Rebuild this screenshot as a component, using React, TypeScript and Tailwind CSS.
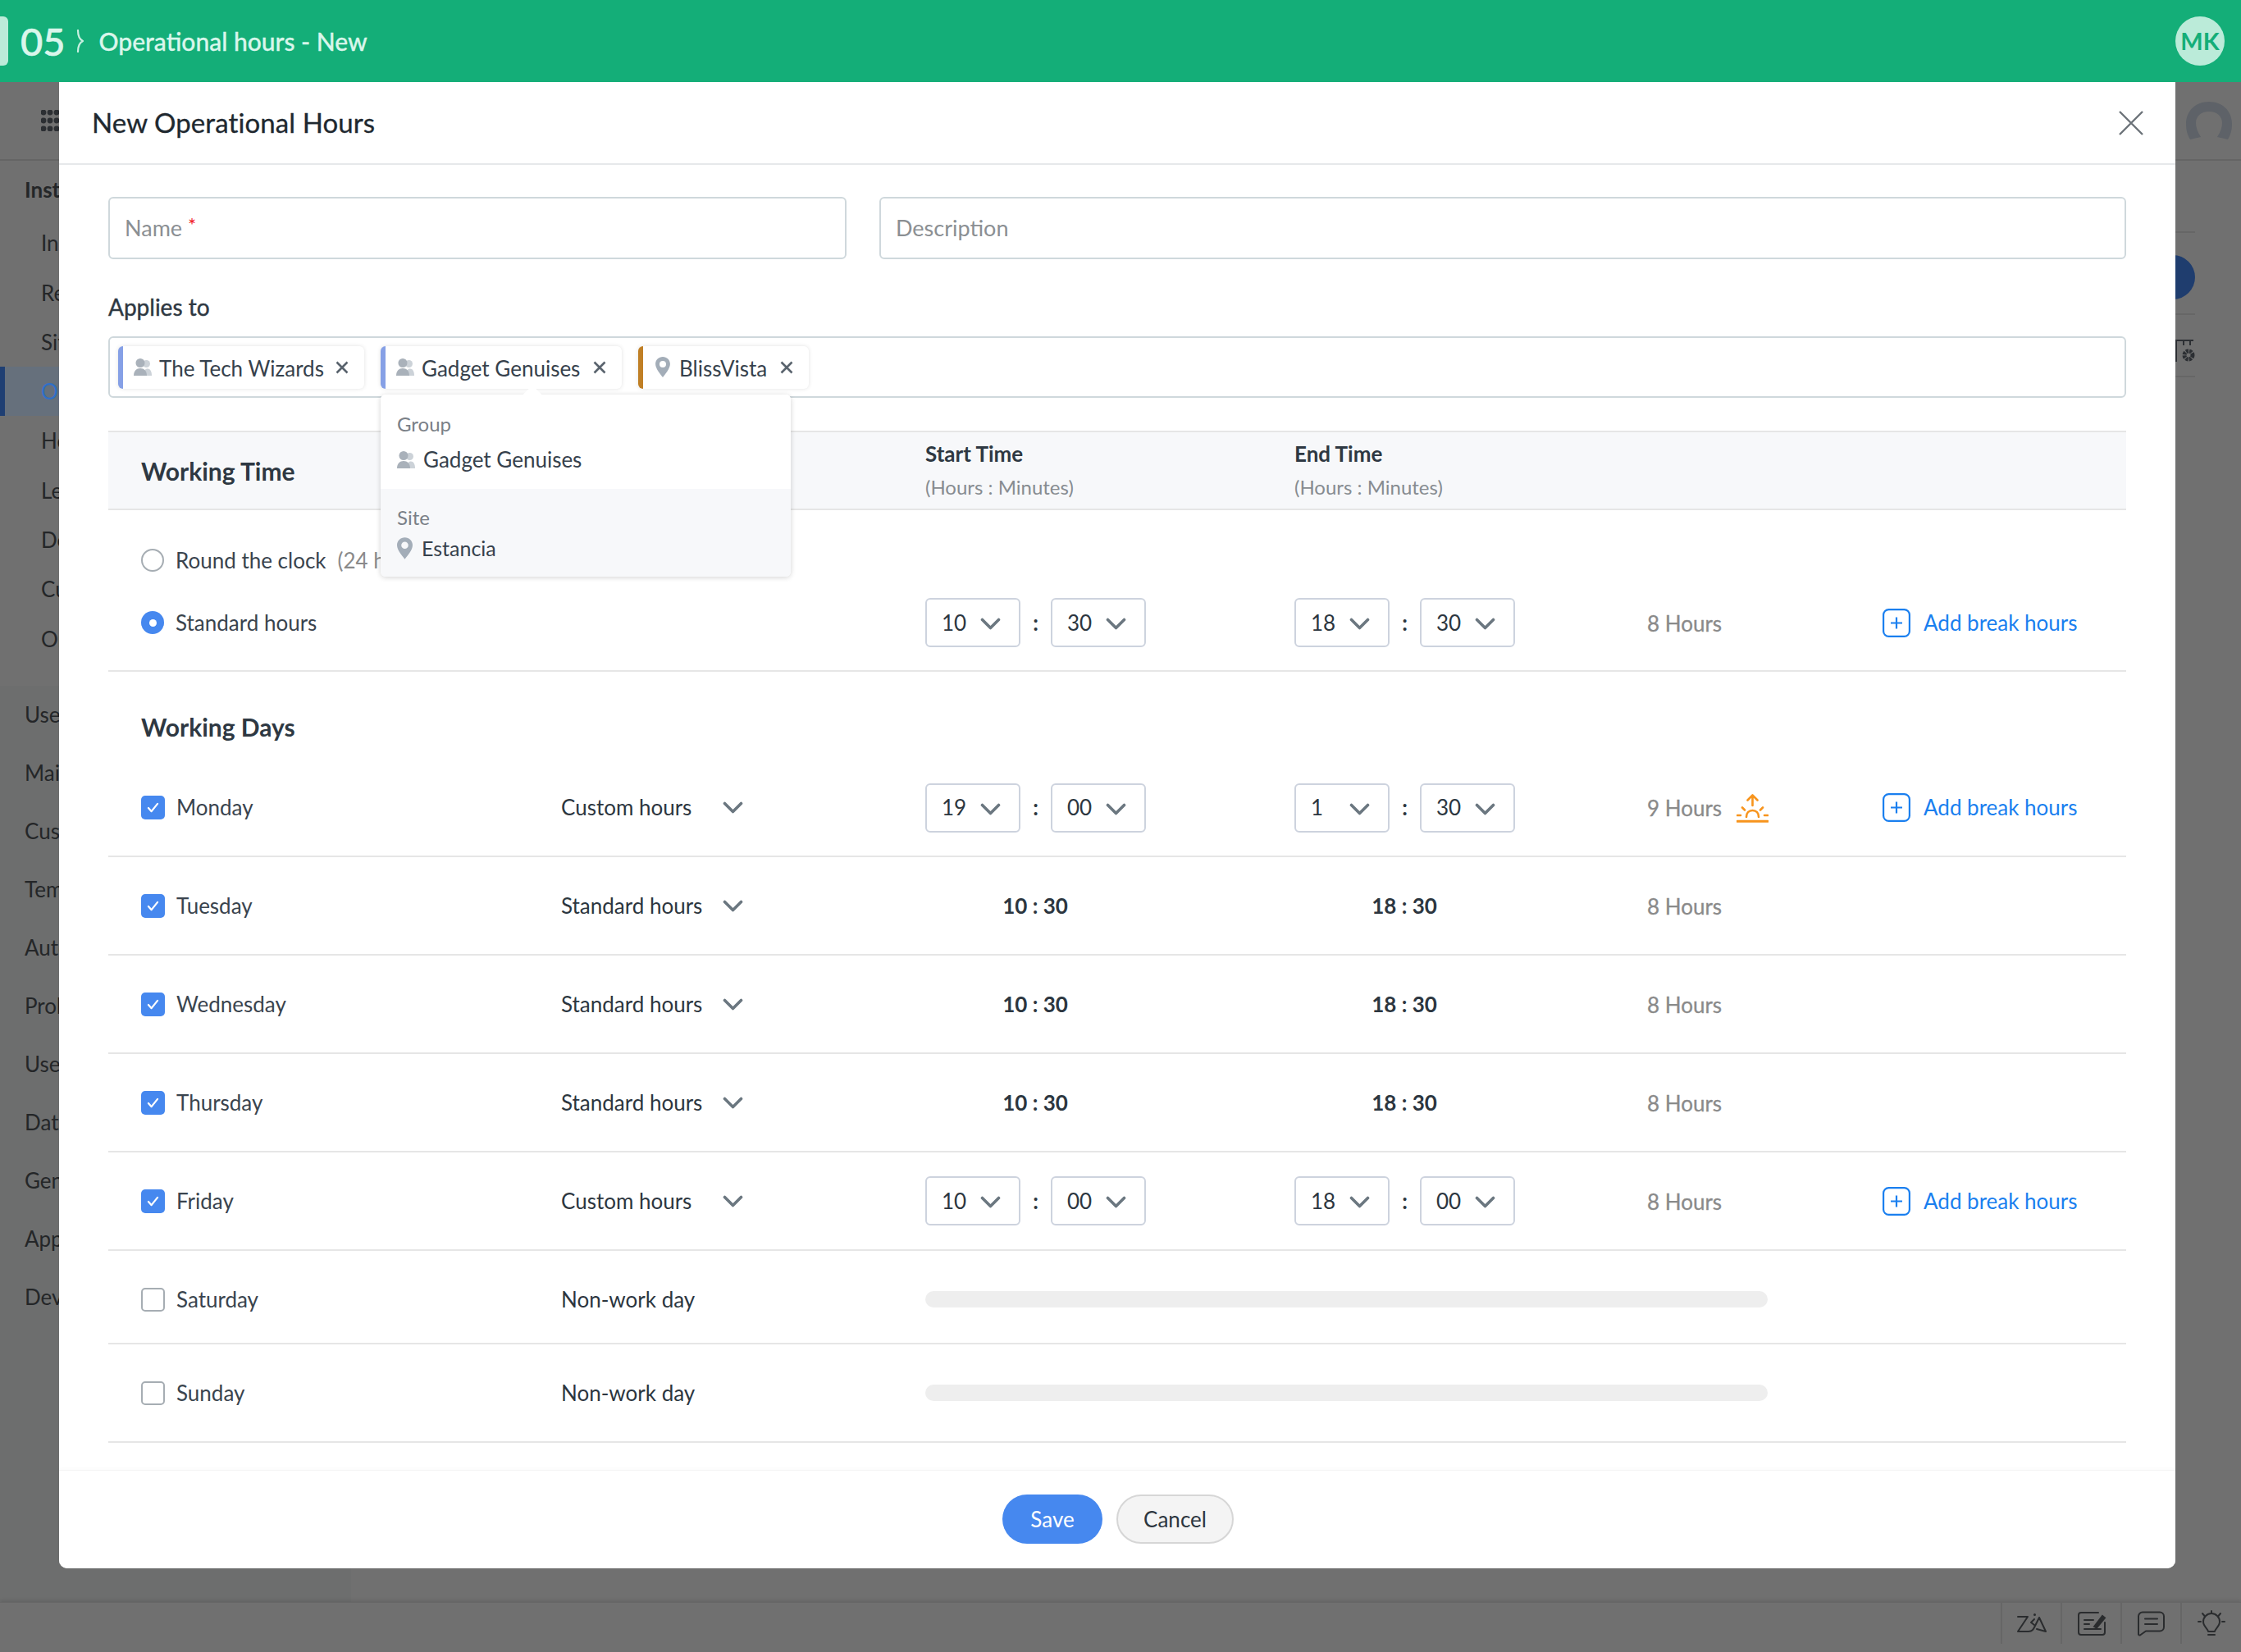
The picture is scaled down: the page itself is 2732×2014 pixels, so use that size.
import React from "react";

const Chevron = ({ className = "w-[25px] h-[15px]" }: { className?: string }) => (
  <svg viewBox="0 0 25 15" className={className} fill="none" stroke="#6b7780" strokeWidth="3.6" strokeLinecap="round" strokeLinejoin="round">
    <path d="M2.5 2.5 L12.5 12.5 L22.5 2.5" />
  </svg>
);

const GroupIcon = ({ className = "" }: { className?: string }) => (
  <svg viewBox="0 0 22 21" className={className}>
    <circle cx="15.5" cy="6.5" r="4.5" fill="#ccd2d8" />
    <path d="M12 21c0-6 2-8.5 5-8.5s5 3 5 8.5z" fill="#ccd2d8" />
    <circle cx="8" cy="5.5" r="5.5" fill="#a9b1ba" />
    <path d="M0 21c0-6 3.5-9 8-9s8 3 8 9z" fill="#a9b1ba" />
  </svg>
);

const PinIcon = ({ className = "" }: { className?: string }) => (
  <svg viewBox="0 0 20 28" className={className}>
    <path fillRule="evenodd" d="M10 0C4.5 0 0 4.4 0 9.8 0 16.5 7.5 24.5 10 28c2.500-3.500 10-11.500 10-18.200C20 4.400 15.500 0 10 0zm0 5.500a4.500 4.500 0 1 1 0 9 4.500 4.500 0 0 1 0-9z" fill="#a3adb8" />
  </svg>
);

const SmallX = () => (
  <svg viewBox="0 0 16 16" className="w-[16px] h-[16px]" fill="none" stroke="#59636d" strokeWidth="2.600">
    <path d="M1.500 1.500 L14.500 14.500 M14.500 1.500 L1.500 14.500" />
  </svg>
);

const Tag = ({ bar, icon, label, width }: { bar: string; icon: React.ReactNode; label: string; width: string }) => (
  <div className={`flex items-center h-[52px] rounded-[6px] bg-white shadow-[0_0_5px_rgba(0,0,0,0.12)] border-l-[6px] ${bar} ${width}`}>
    <div className="w-[44px] flex justify-center pl-[4px]">{icon}</div>
    <span className="text-[26px] leading-[32px] pt-[2px] text-[#36414c] whitespace-nowrap">{label}</span>
    <span className="ml-auto mr-[19px] flex"><SmallX /></span>
  </div>
);

const Select = ({ v }: { v: string }) => (
  <div className="relative w-[116px] h-[60px] rounded-[6px] border-2 border-[#cdd3de] flex items-center pl-[18px] text-[26px] text-[#2c3640] bg-white">
    {v}
    <span className="absolute left-[65px] top-[22px] flex"><Chevron /></span>
  </div>
);

const TimePair = ({ h, m }: { h: string; m: string }) => (
  <div className="flex items-center w-[269px] justify-between">
    <Select v={h} />
    <span className="text-[26px] text-[#2c3640] font-bold">:</span>
    <Select v={m} />
  </div>
);

const AddBreak = () => (
  <div className="flex items-center gap-[16px] text-[#1a7fef] text-[26px] whitespace-nowrap">
    <svg viewBox="0 0 34 35" className="w-[34px] h-[35px] shrink-0" fill="none" stroke="#1a7fef" strokeWidth="2.200">
      <rect x="1.100" y="1.100" width="31.800" height="32.800" rx="6.500" />
      <path d="M17 10.500v14M10 17.500h14" />
    </svg>
    <span>Add break hours</span>
  </div>
);

const Sunrise = () => (
  <svg viewBox="0 0 39 35" className="w-[39px] h-[35px] shrink-0" fill="none" stroke="#f7941d" strokeWidth="2.600" strokeLinecap="round">
    <path d="M19.500 1.500V14M13.500 7.500l6-6 6 6" strokeLinejoin="round" />
    <path d="M12 28c0-5 3-8 7.500-8s7.500 3 7.500 8" />
    <path d="M1 26h4M34 26h4M7 16.500l3 3M32 16.500l-3 3" />
    <path d="M1 33.300h37" strokeWidth="3" />
  </svg>
);

const Check = ({ on }: { on: boolean }) =>
  on ? (
    <div className="w-[29px] h-[29px] rounded-[5px] bg-[#4688ef] flex items-center justify-center">
      <svg viewBox="0 0 16 14" className="w-[15px] h-[13px]" fill="none" stroke="#fff" strokeWidth="2.400" strokeLinecap="round" strokeLinejoin="round">
        <path d="M2 7.500l4 4.500 8-10" />
      </svg>
    </div>
  ) : (
    <div className="w-[29px] h-[29px] rounded-[5px] border-2 border-[#a6adb3] bg-white" />
  );

const gridCols = "grid grid-cols-[512px_444px_450px_430px_287px_297px] items-center pl-[40px]";
const gridRow = `${gridCols} border-b-2 border-[#e6e6e6]`;

const DayName = ({ on, name }: { on: boolean; name: string }) => (
  <div className="flex items-center gap-[14px] text-[26px] text-[#3a444e]">
    <Check on={on} />
    <span>{name}</span>
  </div>
);

const HourType = ({ label }: { label: string }) => (
  <div className="relative flex items-center text-[26px] text-[#2c3640]">
    <span>{label}</span>
    <span className="absolute left-[197px] top-[12px] flex"><Chevron /></span>
  </div>
);

const Hours = ({ t, sun }: { t: string; sun?: boolean }) => (
  <div className="flex items-center gap-[18px] text-[26px] pt-[2px] [-webkit-text-stroke:0.3px_#8a8a8a] text-[#8a8a8a] whitespace-nowrap">
    <span>{t}</span>
    {sun && <Sunrise />}
  </div>
);

const Fixed = ({ t }: { t: string }) => (
  <div className="w-[268px] text-center text-[26px] font-bold text-[#2c3640]">{t}</div>
);

const sidebar: [string, string][] = [
  ["Instance Configuration", "pl-[30px] font-bold h-[70px]"],
  ["Instance Settings", "pl-[50px] h-[61px]"],
  ["Regions", "pl-[50px] h-[60px]"],
  ["Sites", "pl-[50px] h-[60px]"],
  ["Operational Hours", "pl-[44px] h-[60px] text-[#2f6fc8] bg-[#66707c] border-l-[6px] border-[#1f3f73]"],
  ["Holidays", "pl-[50px] h-[61px]"],
  ["Leave Types", "pl-[50px] h-[60px]"],
  ["Departments", "pl-[50px] h-[60px]"],
  ["Currency", "pl-[50px] h-[61px]"],
  ["Organization Roles", "pl-[50px] h-[61px]"],
];
const sidebar2 = ["Users & Permissions", "Mail Settings", "Customization", "Templates", "Automation", "Problem Management", "User Survey", "Data Administration", "General Settings", "Apps & Add-ons", "Developer Space"];

export default function App() {
  return (
    <div className="relative w-[2732px] h-[2014px] overflow-hidden bg-[#707070] font-['Lato',sans-serif] flex flex-col">
      {/* Top bar */}
      <header className="h-[100px] shrink-0 bg-[#14ae78] flex items-center text-[#d9f6eb] relative z-20">
        <div className="w-[10px] h-[60px] rounded-r-[6px] bg-[#bcebd9]" />
        <span className="ml-[15px] text-[47px] leading-none font-medium [-webkit-text-stroke:0.6px_#d9f6eb]">05</span>
        <svg viewBox="0 0 10 28" className="ml-[13px] w-[10px] h-[28px]" fill="none" stroke="#c9f0e1" strokeWidth="2.200" strokeLinecap="round" strokeLinejoin="round">
          <path d="M2 1c0 6 2 11 6 13-4 2-6 7-6 13" />
        </svg>
        <span className="ml-[18px] text-[30px] font-medium whitespace-nowrap [-webkit-text-stroke:0.3px_#d9f6eb]">Operational hours - New</span>
        <div className="ml-auto mr-[20px] w-[60px] h-[60px] rounded-full bg-[#bbebd9] text-[#14ae78] text-[29px] font-bold flex items-center justify-center">MK</div>
      </header>

      {/* Background page */}
      <div className="flex-1 flex min-h-0">
        <aside className="w-[428px] bg-[#6d6e6e] text-[26px] text-[#242628] overflow-hidden shrink-0 flex flex-col">
          <div className="h-[96px] shrink-0 bg-[#707070] border-b-2 border-[#656565] flex items-center pl-[50px]">
            <svg viewBox="0 0 22 26" className="w-[22px] h-[26px]" fill="#2c2f33">
              {[3, 13, 23].map((y) => [3, 11, 19].map((x) => <circle key={`${x}-${y}`} cx={x} cy={y} r="3.400" />))}
            </svg>
          </div>
          <div className="bg-[#707070] shrink-0 h-[640px] flex flex-col">
            {sidebar.map(([t, c]) => (
              <div key={t} className={`flex items-center whitespace-nowrap shrink-0 ${c}`}>{t}</div>
            ))}
          </div>
          {sidebar2.map((t) => (
            <div key={t} className="h-[71px] shrink-0 flex items-center pl-[30px] whitespace-nowrap">{t}</div>
          ))}
        </aside>
        <main className="flex-1 flex justify-end">
          <div className="w-[80px] flex flex-col">
            <div className="h-[96px] flex items-center justify-end pr-[11px] border-b-2 border-[#656565]">
              <svg viewBox="0 0 56 46" className="w-[56px] h-[46px]" fill="#5e6268">
                <path d="M28 0C12 0 0 11 0 27c0 8 2 14 5 19l13-3c-4-6-6-12-6-17 0-8 6-14 16-14s16 6 16 14c0 5-2 11-6 17l13 3c3-5 5-11 5-19C56 11 44 0 28 0z" />
              </svg>
            </div>
            <div className="h-[88px] w-[24px] border-b-2 border-[#666]" />
            <div className="h-[100px] w-[24px] border-b-2 border-[#666]" />
            <div className="h-[76px] w-[24px] border-b-2 border-[#666]" />
          </div>
        </main>
      </div>

      <div className="absolute left-[2622px] top-[311px] w-[54px] h-[54px] rounded-full bg-[#1f3d6e]" />
      <svg viewBox="0 0 26 30" className="absolute left-[2652px] top-[413px] w-[26px] h-[30px]" fill="none" stroke="#2c2f33" strokeWidth="2">
        <path d="M0 2h22M1 2v26M10 2v6M18 2v6" />
        <circle cx="16" cy="20" r="5" strokeWidth="5" strokeDasharray="3 1" />
      </svg>

      {/* Bottom bar */}
      <footer className="h-[61px] shrink-0 bg-[#707070] border-t border-[#666] shadow-[0_-2px_4px_rgba(0,0,0,0.1)] flex justify-end relative">
        {[
          <svg key="z" viewBox="0 0 36 26" className="w-[36px] h-[26px]" fill="none" stroke="#2a2c2e" strokeWidth="2" strokeLinecap="round" strokeLinejoin="round">
            <path d="M1 5h12L1 23h13c5 0 6-3 8-7l5-10 8 17-11-3" />
            <circle cx="21.500" cy="2.500" r="1.500" fill="#2a2c2e" stroke="none" />
            <path d="M21 8l-4 4 4 3" />
          </svg>,
          <svg key="n" viewBox="0 0 36 30" className="w-[36px] h-[30px]" fill="none" stroke="#2a2c2e" strokeWidth="2" strokeLinecap="round">
            <path d="M26 2H5a3 3 0 0 0-3 3v21a3 3 0 0 0 3 3h26a3 3 0 0 0 3-3V14" />
            <path d="M9 11h11M9 16h6M9 22h20" />
            <path d="M21 19l10-13 3 2.500-10 12z" fill="#2a2c2e" />
          </svg>,
          <svg key="c" viewBox="0 0 33 31" className="w-[33px] h-[31px]" fill="none" stroke="#2a2c2e" strokeWidth="2" strokeLinecap="round" strokeLinejoin="round">
            <path d="M6 1.500h21a5 5 0 0 1 5 5v13a5 5 0 0 1-5 5H10l-7 5a1.500 1.500 0 0 1-2-1V6.500a5 5 0 0 1 5-5z" />
            <path d="M9 9.500h15M9 16h15" />
          </svg>,
          <svg key="b" viewBox="0 0 34 33" className="w-[34px] h-[33px]" fill="none" stroke="#2a2c2e" strokeWidth="2" strokeLinecap="round" strokeLinejoin="round">
            <path d="M17 1v3M1 14h3M30 14h3M6 4l2.500 3M28 4l-2.500 3" />
            <path d="M13 26c0-3-6-6-6-12a10 10 0 0 1 20 0c0 6-6 9-6 12z" />
            <path d="M13 30h8" />
          </svg>,
        ].map((ic, i) => (
          <div key={i} className="w-[73px] h-[50px] border-l-2 border-[#666] flex items-center justify-center shrink-0 last:w-[74px]">{ic}</div>
        ))}
      </footer>

      {/* Modal */}
      <div className="absolute left-[72px] top-[100px] w-[2580px] h-[1812px] bg-white rounded-b-[10px] flex flex-col z-10 text-[#36414c]">
        <div className="h-[101px] shrink-0 border-b-2 border-[#e6e8ea] flex items-center pl-[40px] pr-[39px]">
          <h1 className="text-[33px] [-webkit-text-stroke:0.3px_#20282f] text-[#20282f] tracking-[0.1px]">New Operational Hours</h1>
          <svg viewBox="0 0 30 30" className="ml-auto w-[30px] h-[30px]" fill="none" stroke="#6b7278" strokeWidth="2.400">
            <path d="M1 1 L29 29 M29 1 L1 29" />
          </svg>
        </div>

        <div className="flex-1 min-h-0 px-[60px] pt-[39px]">
          <div className="flex gap-[40px]">
            <div className="w-[900px] h-[76px] rounded-[6px] border-2 border-[#cfd8dc] flex items-start pl-[18px] pt-[19px] text-[27px] leading-[34px] text-[#8b8f93]">
              Name<span className="text-[#f0202a] ml-[7px] text-[24px] leading-[26px]">*</span>
            </div>
            <div className="flex-1 h-[76px] rounded-[6px] border-2 border-[#cfd8dc] flex items-center pl-[18px] text-[27px] text-[#8b8f93]">Description</div>
          </div>

          <div className="mt-[39px] h-[38px] flex items-center text-[28px] [-webkit-text-stroke:0.4px_#2e3842] text-[#2e3842]">Applies to</div>

          <div className="relative mt-[17px] h-[75px] rounded-[6px] border-2 border-[#cfd8dc] flex items-center gap-[20px] pl-[10px]">
            <Tag bar="border-[#86a0e6]" width="w-[300px]" icon={<GroupIcon className="w-[22px] h-[21px]" />} label="The Tech Wizards" />
            <Tag bar="border-[#86a0e6]" width="w-[294px]" icon={<GroupIcon className="w-[22px] h-[21px]" />} label="Gadget Genuises" />
            <Tag bar="border-[#c07f25]" width="w-[208px]" icon={<PinIcon className="w-[18px] h-[25px]" />} label="BlissVista" />

            <div className="absolute left-[330px] top-[69px] w-[500px] h-[222px] z-30 rounded-[6px] bg-white shadow-[0_1px_6px_rgba(0,0,0,0.18)] flex flex-col">
              <div className="absolute left-[177px] top-[-8px] w-[16px] h-[16px] bg-white rotate-45" />
              <div className="relative h-[115px] shrink-0 pl-[20px] pt-[21px] rounded-t-[6px] bg-white">
                <div className="text-[24px] leading-[30px] text-[#7a8087]">Group</div>
                <div className="mt-[13px] flex items-center gap-[10px] text-[26px] leading-[30px] text-[#36414c]">
                  <GroupIcon className="w-[22px] h-[21px]" />
                  Gadget Genuises
                </div>
              </div>
              <div className="flex-1 pl-[20px] pt-[20px] bg-[#f7f8fa] rounded-b-[6px]">
                <div className="text-[24px] leading-[30px] text-[#7a8087]">Site</div>
                <div className="mt-[7px] flex items-center gap-[11px] text-[25px] leading-[30px] text-[#36414c]">
                  <PinIcon className="w-[19px] h-[27px]" />
                  Estancia
                </div>
              </div>
            </div>
          </div>

          <div className={`mt-[40px] h-[97px] bg-[#f7f8fa] border-y-2 border-[#e6e6e6] ${gridCols}`}>
            <div className="text-[30px] font-bold text-[#2e3842] pt-[2px]">Working Time</div>
            <div />
            <div className="flex flex-col gap-[9px] text-[26px] leading-[32px]">
              <span className="font-bold text-[#2e3842]">Start Time</span>
              <span className="text-[24px] text-[#878c91]">(Hours : Minutes)</span>
            </div>
            <div className="flex flex-col gap-[9px] text-[26px] leading-[32px]">
              <span className="font-bold text-[#2e3842]">End Time</span>
              <span className="text-[24px] text-[#878c91]">(Hours : Minutes)</span>
            </div>
          </div>

          <div className="pt-[31px] pb-[28px] border-b-2 border-[#e6e6e6]">
            <div className="h-[60px] pl-[40px] flex items-center gap-[14px] text-[26px] text-[#3a444e]">
              <div className="w-[28px] h-[28px] rounded-full border-2 border-[#a6adb3]" />
              <span>Round the clock</span>
              <span className="text-[#8a8a8a]">(24 hours)</span>
            </div>
            <div className={`mt-[16px] h-[60px] ${gridCols}`}>
              <div className="flex items-center gap-[14px] text-[26px] text-[#3a444e]">
                <div className="w-[28px] h-[28px] rounded-full bg-[#4688ef] flex items-center justify-center">
                  <div className="w-[9px] h-[9px] rounded-full bg-white" />
                </div>
                <span>Standard hours</span>
              </div>
              <div />
              <TimePair h="10" m="30" />
              <TimePair h="18" m="30" />
              <Hours t="8 Hours" />
              <AddBreak />
            </div>
          </div>

          <div className="mt-[47px] pl-[40px] h-[40px] flex items-center text-[30px] font-bold text-[#2e3842]">Working Days</div>

          <div className={`${gridRow} mt-[20px] h-[119px]`}>
            <DayName on name="Monday" />
            <HourType label="Custom hours" />
            <TimePair h="19" m="00" />
            <TimePair h="1" m="30" />
            <Hours t="9 Hours" sun />
            <AddBreak />
          </div>
          {["Tuesday", "Wednesday", "Thursday"].map((d) => (
            <div key={d} className={`${gridRow} h-[120px]`}>
              <DayName on name={d} />
              <HourType label="Standard hours" />
              <Fixed t="10 : 30" />
              <Fixed t="18 : 30" />
              <Hours t="8 Hours" />
            </div>
          ))}
          <div className={`${gridRow} h-[120px]`}>
            <DayName on name="Friday" />
            <HourType label="Custom hours" />
            <TimePair h="10" m="00" />
            <TimePair h="18" m="00" />
            <Hours t="8 Hours" />
            <AddBreak />
          </div>
          {[
            ["Saturday", "h-[114px] pt-[6px]"],
            ["Sunday", "h-[120px]"],
          ].map(([d, h]) => (
            <div key={d} className={`${gridRow} ${h}`}>
              <DayName on={false} name={d} />
              <div className="text-[26px] text-[#2c3640]">Non-work day</div>
              <div className="w-[1027px] h-[20px] rounded-full bg-[#eeeeee]" />
            </div>
          ))}
        </div>

        <div className="h-[120px] shrink-0 rounded-b-[10px] bg-white border-t border-[#f5f5f5] shadow-[0_-2px_4px_rgba(0,0,0,0.02)] flex items-center justify-center gap-[17px] pl-[2px] pb-[1px]">
          <button className="w-[122px] h-[60px] rounded-full bg-[#4688ef] text-white text-[26px]">Save</button>
          <button className="w-[143px] h-[60px] rounded-full bg-[#f4f4f4] border-2 border-[#d6d6d6] text-[#2c3640] text-[26px]">Cancel</button>
        </div>
      </div>
    </div>
  );
}
